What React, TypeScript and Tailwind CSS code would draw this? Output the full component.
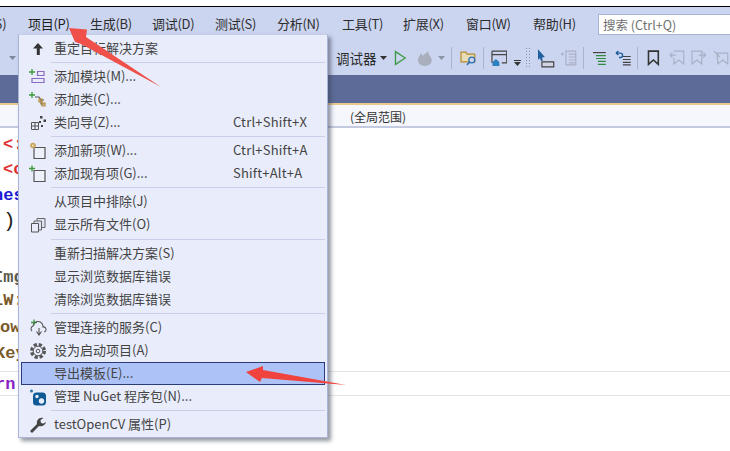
const font = "font-['Noto_Sans_CJK_SC','Noto_Sans',sans-serif]";

const menuBar = [
  { label: "项目(P)", w: "w-[41px]" },
  { label: "生成(B)", w: "w-[41px]" },
  { label: "调试(D)", w: "w-[42px]" },
  { label: "测试(S)", w: "w-[41px]" },
  { label: "分析(N)", w: "w-[44px]" },
  { label: "工具(T)", w: "w-[40px]" },
  { label: "扩展(X)", w: "w-[42px]" },
  { label: "窗口(W)", w: "w-[46px]" },
  { label: "帮助(H)", w: "w-[43px]" },
];

function Plus({ x = 0, y = 0 }: { x?: number; y?: number }) {
  return <path d={`M${x + 3} ${y}v6M${x} ${y + 3}h6`} stroke="#3a9a3a" strokeWidth="1.3" fill="none" />;
}

function Icon({ name }: { name: string }) {
  const common = { width: 18, height: 18, viewBox: "0 0 18 18", fill: "none" };
  switch (name) {
    case "up":
      return (
        <svg {...common}>
          <path d="M9 3l5 5.500h-3.200V15H7.800V8.500H4z" fill="#333" />
        </svg>
      );
    case "module":
      return (
        <svg {...common}>
          <Plus x={0} y={1} />
          <path d="M8.500 3.500h6.500v4H8.500zM3 10.500h12v4H3z" stroke="#8a6bbd" strokeWidth="1.200" />
        </svg>
      );
    case "class":
      return (
        <svg {...common}>
          <Plus x={0} y={1} />
          <path d="M6 6h4l2 3M12 9v4h3M12 9h3" stroke="#555" strokeWidth="1.100" />
          <path d="M10 8h3v3h-3zM13 12h3v3h-3z" stroke="#b88a2c" strokeWidth="1.200" />
        </svg>
      );
    case "wizard":
      return (
        <svg {...common}>
          <path d="M2.500 8.500h7v7h-7zM6 8.500v7M2.500 12h7" stroke="#555" strokeWidth="1" />
          <path d="M11 2h2.500v2.500H11zM14.500 5.500H17V8h-2.500zM10 7h2v2h-2zM12 11h2v2h-2z" fill="#444" />
        </svg>
      );
    case "newitem":
      return (
        <svg {...common}>
          <path d="M5 5.500h11v11H5z" fill="#eef1fa" stroke="#555" strokeWidth="1.200" />
          <circle cx="4" cy="3.500" r="2.800" fill="#c9a45a" />
          <circle cx="4" cy="3.500" r="1" fill="#f5e7c2" />
        </svg>
      );
    case "additem":
      return (
        <svg {...common}>
          <path d="M5 5.500h11v11H5z" fill="#eef1fa" stroke="#555" strokeWidth="1.200" />
          <Plus x={0} y={0.5} />
        </svg>
      );
    case "files":
      return (
        <svg {...common}>
          <path d="M8 2.500h8v9H8z" fill="#dfe3f2" stroke="#666" />
          <path d="M5 5h7.500v9H5z" fill="#dfe3f2" stroke="#666" />
          <path d="M2.500 7.500h7V16h-7z" fill="#e9edfb" stroke="#555" />
        </svg>
      );
    case "service":
      return (
        <svg {...common}>
          <Plus x={2} y={0.5} />
          <path d="M3 12a3 3 0 0 1 1-5 5 5 0 0 1 10 1 2.500 2.500 0 0 1 1 5" stroke="#555" strokeWidth="1.100" />
          <path d="M10 9v7M7.500 12.500L10 16l2.500-3.500" stroke="#555" strokeWidth="1.100" />
        </svg>
      );
    case "gear":
      return (
        <svg {...common}>
          <circle cx="9" cy="9" r="6.500" stroke="#555" strokeWidth="3" strokeDasharray="3.200 1.900" />
          <circle cx="9" cy="9" r="4.800" stroke="#555" strokeWidth="1" />
          <circle cx="9" cy="9" r="1.800" stroke="#555" strokeWidth="1" />
        </svg>
      );
    case "nuget":
      return (
        <svg {...common}>
          <circle cx="2.500" cy="3" r="1.500" fill="#2a6fa8" />
          <rect x="4" y="4.500" width="13" height="13" rx="3.500" fill="#0f5a94" />
          <circle cx="8" cy="8.500" r="1.700" fill="#e9edfb" />
          <circle cx="12.500" cy="13" r="2.700" fill="#e9edfb" />
        </svg>
      );
    case "wrench":
      return (
        <svg {...common}>
          <path d="M1 15l2 2 7-7c2.800 1 6.500-.8 7-4l-3 1.800-2.200-1.300L11.500 4l3-2C11 .500 7 3.800 8 8z" fill="#444" />
        </svg>
      );
    default:
      return null;
  }
}

type Row = { label?: string; short?: string; icon?: string; active?: boolean; sep?: boolean; h?: string };

const rows: Row[] = [
  { label: "重定目标解决方案", icon: "up" },
  { sep: true },
  { label: "添加模块(M)...", icon: "module" },
  { label: "添加类(C)...", icon: "class" },
  { label: "类向导(Z)...", icon: "wizard", short: "Ctrl+Shift+X" },
  { sep: true },
  { label: "添加新项(W)...", icon: "newitem", short: "Ctrl+Shift+A" },
  { label: "添加现有项(G)...", icon: "additem", short: "Shift+Alt+A" },
  { sep: true },
  { label: "从项目中排除(J)" },
  { label: "显示所有文件(O)", icon: "files" },
  { sep: true, h: "h-[6px]" },
  { label: "重新扫描解决方案(S)" },
  { label: "显示浏览数据库错误" },
  { label: "清除浏览数据库错误" },
  { sep: true },
  { label: "管理连接的服务(C)", icon: "service" },
  { label: "设为启动项目(A)", icon: "gear" },
  { label: "导出模板(E)...", active: true },
  { label: "管理 NuGet 程序包(N)...", icon: "nuget" },
  { sep: true },
  { label: "testOpenCV 属性(P)", icon: "wrench" },
];

function Sep() {
  return <div className="w-px h-[22px] bg-[#aab4d0] mx-[5px]" />;
}

function Caret({ color = "#333" }: { color?: string }) {
  return (
    <svg width="7" height="4" viewBox="0 0 7 4">
      <path d="M0 0h7L3.500 4z" fill={color} />
    </svg>
  );
}

function Toolbar() {
  return (
    <div className="h-[34px] flex items-center overflow-hidden bg-[#ccd5f0]">
      <div className="ml-[9px]">
        <Caret color="#7f8699" />
      </div>
      <div className="ml-[320px] w-[51px] flex items-center gap-[3px] text-[13.5px] text-[#2a2a2a] whitespace-nowrap">
        调试器
        <Caret />
      </div>
      <svg className="ml-[7px]" width="13" height="16" viewBox="0 0 13 16" fill="none">
        <path d="M1.500 1.500v13l10-6.500z" stroke="#3f9a48" strokeWidth="1.400" />
      </svg>
      <svg className="ml-[11px]" width="16" height="17" viewBox="0 0 16 17">
        <path d="M8 16c-4 0-7-2.500-7-6 0-3 2-4 3-7 1 1 1.500 2 1.500 3C7 4.500 9 3 12 1c-1 2.500 0 3.500 1.500 5.500 1 1.500 1.500 2.500 1.500 4 0 3-3 5.500-7 5.500z" fill="#a9afbd" />
      </svg>
      <div className="ml-[5px]">
        <Caret color="#8d94a8" />
      </div>
      <div className="ml-[1px]"><Sep /></div>
      <svg className="ml-[3px]" width="18" height="16" viewBox="0 0 18 16" fill="none">
        <path d="M1 2h5l1 2h8v8H1z" stroke="#b58a2c" strokeWidth="1.200" fill="#e7dcb4" />
        <circle cx="12" cy="10" r="3" stroke="#2c6fb0" strokeWidth="1.300" fill="#ccd5f0" />
        <path d="M10 12l-3 3" stroke="#2c6fb0" strokeWidth="1.500" />
      </svg>
      <Sep />
      <svg className="ml-[2px]" width="17" height="17" viewBox="0 0 17 17" fill="none">
        <path d="M1 1h15v12h-5M1 13V1M1 4.500h15" stroke="#444" strokeWidth="1.200" />
        <path d="M1.500 12l3.500-3 3.500 3v4H1.500z" fill="#2c7fc0" />
      </svg>
      <svg className="ml-[7px] mt-[10px]" width="7" height="6" viewBox="0 0 7 6">
        <path d="M0 0h7v1H0zM0 2h7L3.500 6z" fill="#333" />
      </svg>
      <div className="ml-[4px] w-[6px] h-[22px] bg-[radial-gradient(#8c93a8_1px,transparent_1px)] bg-[length:3px_3px]" />
      <svg className="ml-[6px]" width="18" height="19" viewBox="0 0 18 19">
        <path d="M1 0l7 8-3 .500 1 3-2 .500-1-3-2 2z" fill="#1f5f9e" />
        <path d="M5 13h12v5H5z" fill="#cfd5e5" stroke="#444" strokeWidth="1.200" />
      </svg>
      <svg className="ml-[5px]" width="17" height="16" viewBox="0 0 17 16" fill="none">
        <path d="M6 1h10v14H6zM1 4h3M2.500 2.500v3M9 4h6M9 7h6M9 10h6M9 13h6" stroke="#a9b0c4" strokeWidth="1.200" />
      </svg>
      <div className="ml-[1px]"><Sep /></div>
      <svg className="ml-[4px]" width="15" height="15" viewBox="0 0 15 15" fill="none">
        <path d="M3 4.500h10M3 7.500h10M5 10.500h8M5 13.500h8" stroke="#2e8a3e" strokeWidth="1.200" />
        <path d="M0 1.500h13" stroke="#444" strokeWidth="1.200" />
      </svg>
      <svg className="ml-[7px]" width="18" height="16" viewBox="0 0 18 16" fill="none">
        <path d="M9 6.500h8M9 9.500h8M9 12.500h8M9 15h8" stroke="#444" strokeWidth="1.200" />
        <path d="M2 3l2.500-2M2 3l2.500 2M2 3h4.500a2 2 0 0 1 0 4.500H5" stroke="#1f5f9e" strokeWidth="1.400" />
      </svg>
      <Sep />
      <svg className="ml-[4px]" width="13" height="16" viewBox="0 0 13 16" fill="none">
        <path d="M1.500 1h10v13.500L6.500 10l-5 4.500z" stroke="#333" strokeWidth="1.600" />
      </svg>
      <svg className="ml-[9px]" width="17" height="16" viewBox="0 0 17 16" fill="none">
        <path d="M5 1h10v13l-5-4-5 4V8M1 5h6M3.500 2.500L1 5l2.500 2.500" stroke="#a9b0c4" strokeWidth="1.200" />
      </svg>
      <svg className="ml-[4px]" width="17" height="16" viewBox="0 0 17 16" fill="none">
        <path d="M2 1h10v13l-5-4-5 4zM9 5h7M13.500 2.500L16 5l-2.500 2.500" stroke="#a9b0c4" strokeWidth="1.200" />
      </svg>
      <svg className="ml-[7px]" width="17" height="16" viewBox="0 0 17 16" fill="none">
        <path d="M4 3h11v11l-5-4-5 4zM1 1l6 6" stroke="#a9b0c4" strokeWidth="1.200" />
      </svg>
    </div>
  );
}

function ProjectMenu() {
  return (
    <div className="absolute left-[18px] top-[34px] w-[310px] h-[404px] bg-[#e9edfb] border border-[#a9b4d6] border-t-[#c3cde9] pt-[2px] shadow-[3px_3px_4px_rgba(60,65,85,0.55)]">
      {rows.map((r, i) =>
        r.sep ? (
          <div key={i} className={`${r.h ?? "h-[5px]"} ml-[32px] mr-[2px] flex items-center`}>
            <div className="h-px w-full bg-[#c8cfe6]" />
          </div>
        ) : (
          <div
            key={i}
            className={`h-[23px] mx-[2px] flex items-center text-[13px] text-[#444] ${
              r.active ? "bg-[#adc3f7] border border-[#2c3c78]" : ""
            }`}
          >
            <div className={`w-[33px] flex justify-center shrink-0 ${r.active ? "-ml-px" : ""}`}>
              {r.icon && <Icon name={r.icon} />}
            </div>
            <span className="whitespace-nowrap pb-[2px]">{r.label}</span>
            {r.short && <span className="ml-auto w-[92px] pb-[2px] tracking-[0.2px] whitespace-nowrap">{r.short}</span>}
          </div>
        )
      )}
    </div>
  );
}

function Arrows() {
  return (
    <svg className="absolute left-0 top-0 pointer-events-none" width="730" height="451" viewBox="0 0 730 451">
      <path d="M69 28L87 29.500 86 37 161 87 81 44 75 42z" fill="#f0504a" />
      <path d="M246 372L263 366 263 370 346 385 262 378 260 382z" fill="#f0433e" />
    </svg>
  );
}

const code = [
  { t: "<:", c: "text-[#e03030] pl-[3px] font-bold", h: "h-[30px]" },
  { t: "<c", c: "text-[#e03030] pl-[3px] font-bold", h: "h-[25px]" },
  { t: "nes", c: "text-[#1a1ad6] -ml-[7px] font-bold", h: "h-[26px]" },
  { t: ")", c: "text-[#222] pl-[3px] text-[21px]", h: "h-[26px]" },
  { t: "Img", c: "text-[#5a5a4a] -ml-[7px] font-bold", h: "h-[56px]" },
  { t: "lW:", c: "text-[#7a5a28] -ml-[7px] font-bold", h: "h-[23px]" },
  { t: "ow", c: "text-[#7a5a28] font-bold", h: "h-[27px]" },
  { t: "Key", c: "text-[#7a5a28] -ml-[5px] font-bold", h: "h-[26px]" },
];

export default function App() {
  return (
    <div className={`relative w-[730px] h-[451px] overflow-hidden bg-white ${font}`}>
      <div className="h-[6px] bg-white" />
      <div className="h-px bg-black" />

      {/* menu bar */}
      <div className="h-[34px] bg-[#ccd5f0] flex items-center text-[13px] text-[#2d2d2d] whitespace-nowrap">
        <span className="w-[33px] -ml-[5px]">6)</span>
        {menuBar.map((m, i) => (
          <span key={m.label} className={`${m.w} mr-[21px] tracking-[-0.3px] ${i === 0 ? "text-[#1e1e1e]" : ""}`}>
            {m.label}
          </span>
        ))}
        <div className="ml-auto w-[132px] h-[21px] bg-white border border-[#a8b3d2] border-r-0 pl-[4px] text-[12.5px] leading-[19px] text-[#707070]">
          搜索 (Ctrl+Q)
        </div>
      </div>

      <Toolbar />

      <div className="h-[28px] bg-[#5d6b99]" />
      <div className="h-[2px] bg-[#e9c98e]" />
      <div className="h-[23px] bg-[#f5f7fd] border-b-2 border-[#c4cbe0] pl-[350px] text-[12px] leading-[23px] text-[#333]">
        (全局范围)
      </div>

      {/* code behind the menu */}
      <div className="relative text-[17px] leading-[26px] font-['Liberation_Mono',monospace] whitespace-pre">
        {code.map((l) => (
          <div key={l.t} className={`${l.h} flex items-end overflow-hidden`}>
            <span className={l.c}>{l.t}</span>
          </div>
        ))}
        <div className="mt-[4px] h-[25px] border-y border-[#e4e4e4] leading-[25px] font-bold text-[#8a1fc4] overflow-hidden">
          <span className="-ml-[5px] block">rn</span>
        </div>
      </div>

      <ProjectMenu />
      <Arrows />
    </div>
  );
}
